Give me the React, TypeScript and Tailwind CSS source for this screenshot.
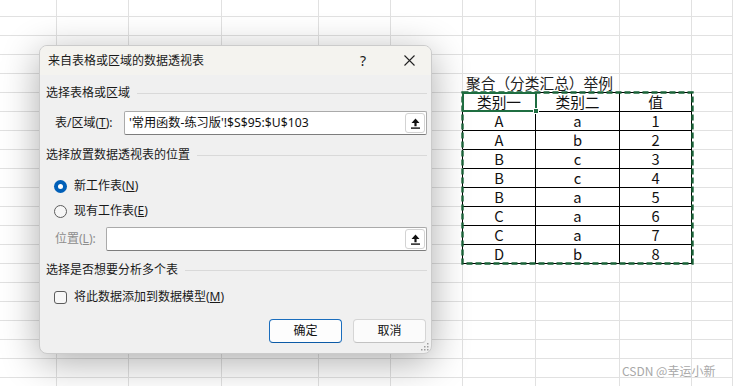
import clsx from "clsx";

const COLS = [57, 72, 93, 97, 72, 72, 73, 84, 72, 41];
const ROW_COUNT = 21;

const table = [
  ["类别一", "类别二", "值"],
  ["A", "a", "1"],
  ["A", "b", "2"],
  ["B", "c", "3"],
  ["B", "c", "4"],
  ["B", "a", "5"],
  ["C", "a", "6"],
  ["C", "a", "7"],
  ["D", "b", "8"],
];

// table sits at rows 5..13, cols 6..8
function Cell({ r, c }: { r: number; c: number }) {
  const inTable = r >= 5 && r <= 13 && c >= 6 && c <= 8;
  const leftEdge = r >= 5 && r <= 13 && c === 5;
  const topEdge = r === 4 && c >= 6 && c <= 8;
  const isTitle = r === 4 && c === 6;

  return (
    <div
      style={{ width: COLS[c] }}
      className={clsx(
        "relative shrink-0 h-full border-r border-b border-[#e1e1e1]",
        (inTable || leftEdge) && "border-r-black",
        (inTable || topEdge) && "border-b-black",
        isTitle && "border-r-transparent",
        inTable && "flex items-center justify-center"
      )}
    >
      {isTitle && (
        <span className="absolute left-[3px] bottom-0 whitespace-nowrap text-[14.7px] leading-[18px] text-[#222]">
          聚合（分类汇总）举例
        </span>
      )}
      {inTable && (
        <span className="text-[14.7px] leading-[18px] text-[#111]">{table[r - 5][c - 6]}</span>
      )}
    </div>
  );
}

function Sheet() {
  return (
    <div className="flex flex-col font-['Noto_Sans_CJK_SC',sans-serif]">
      {Array.from({ length: ROW_COUNT }).map((_, r) => (
        <div key={r} className={clsx("flex", r === 0 ? "h-[17px]" : "h-[19px]")}>
          {COLS.map((_, c) => (
            <Cell key={c} r={r} c={c} />
          ))}
        </div>
      ))}
    </div>
  );
}

function UploadIcon() {
  return (
    <svg width="9" height="11" viewBox="0 0 9 11">
      <path d="M4.5 0.5 L8.5 5 L5.6 5 L5.6 8.3 L3.4 8.3 L3.4 5 L0.5 5 Z" fill="#111" />
      <rect x="0" y="9.4" width="9" height="1.4" fill="#111" />
    </svg>
  );
}

function RefInput({ value }: { value?: string }) {
  return (
    <div className="flex-1 h-[24px] bg-white border border-[#aaaaaa] border-b-[#7d7d7d] rounded-[2px] flex items-center">
      <span className="pl-[4px] flex-1 text-[12.2px] leading-[16px] text-[#111] whitespace-nowrap">{value}</span>
      <div className="w-[20px] h-[20px] mr-[1px] rounded-[3px] border border-[#d3d3d3] bg-white flex items-center justify-center">
        <UploadIcon />
      </div>
    </div>
  );
}

function SectionHeader({ label }: { label: string }) {
  return (
    <div className="h-[18px] flex items-center">
      <span className="leading-[18px]">{label}</span>
      <div className="flex-1 h-px bg-[#d9d9d9] ml-[7px]" />
    </div>
  );
}

function Dialog() {
  return (
    <div className="absolute left-[39px] top-[45px] w-[393px] h-[309px] rounded-[8px] border border-[#cbcbcb] bg-[#f0f0f0] shadow-[0_8px_38px_rgba(0,0,0,0.33)] overflow-hidden flex flex-col text-[12px] text-[#1a1a1a] font-['Noto_Sans','Noto_Sans_CJK_SC',sans-serif]">
      <div className="h-[29px] shrink-0 bg-[#f4f3ef] flex items-center pl-[8px]">
        <span className="leading-[18px] mt-[1px]">来自表格或区域的数据透视表</span>
        <span className="ml-auto text-[14px] leading-[18px] mr-[38px]">?</span>
        <svg width="11" height="11" viewBox="0 0 11 11" className="mr-[16px]">
          <path d="M0.5 0.5 L10.5 10.5 M10.5 0.5 L0.5 10.5" stroke="#222" strokeWidth="1.1" />
        </svg>
      </div>

      <div className="flex flex-col pl-[6px] pr-[4px] pt-[9px]">
        <SectionHeader label="选择表格或区域" />

        <div className="mt-[9px] h-[24px] flex items-center">
          <span className="ml-[9px] w-[69px] leading-[16px]">
            表/区域(<span className="underline">T</span>):
          </span>
          <RefInput value="'常用函数-练习版'!$S$95:$U$103" />
        </div>

        <div className="mt-[11px]">
          <SectionHeader label="选择放置数据透视表的位置" />
        </div>

        <div className="mt-[13px] h-[18px] flex items-center ml-[8px]">
          <div className="w-[13px] h-[13px] rounded-full bg-[#005fb8] flex items-center justify-center">
            <div className="w-[5px] h-[5px] rounded-full bg-white" />
          </div>
          <span className="ml-[7px] leading-[18px]">
            新工作表(<span className="underline">N</span>)
          </span>
        </div>

        <div className="mt-[7px] h-[18px] flex items-center ml-[8px]">
          <div className="w-[13px] h-[13px] rounded-full border border-[#5c5c5c] bg-[#f6f6f6]" />
          <span className="ml-[7px] leading-[18px]">
            现有工作表(<span className="underline">E</span>)
          </span>
        </div>

        <div className="mt-[7px] h-[24px] flex items-center">
          <span className="ml-[9px] w-[51px] leading-[16px] text-[#8d8d8d]">
            位置(<span className="underline">L</span>):
          </span>
          <RefInput />
        </div>

        <div className="mt-[10px]">
          <SectionHeader label="选择是否想要分析多个表" />
        </div>

        <div className="mt-[9px] h-[18px] flex items-center ml-[8px]">
          <div className="w-[13px] h-[13px] rounded-[3px] border border-[#5c5c5c] bg-[#f7f7f7]" />
          <span className="ml-[7px] leading-[18px]">
            将此数据添加到数据模型(<span className="underline">M</span>)
          </span>
        </div>

        <div className="mt-[13px] flex justify-end gap-[11px] pr-[1px]">
          <button className="w-[73px] h-[24px] rounded-[4px] border border-[#1a6dbd] border-b-[#0b5aa6] bg-[#fdfdfd] text-[12px] leading-[16px] text-[#111]">
            确定
          </button>
          <button className="w-[73px] h-[24px] rounded-[4px] border border-[#d5d5d5] border-b-[#c2c2c2] bg-[#fbfbfb] text-[12px] leading-[16px] text-[#111]">
            取消
          </button>
        </div>
      </div>

      <svg width="8" height="8" viewBox="0 0 8 8" className="absolute right-[2px] bottom-[2px]">
        <rect x="6" y="0" width="1.5" height="1.5" fill="#9d9d9d" />
        <rect x="3" y="3" width="1.5" height="1.5" fill="#9d9d9d" />
        <rect x="6" y="3" width="1.5" height="1.5" fill="#9d9d9d" />
        <rect x="0" y="6" width="1.5" height="1.5" fill="#9d9d9d" />
        <rect x="3" y="6" width="1.5" height="1.5" fill="#9d9d9d" />
        <rect x="6" y="6" width="1.5" height="1.5" fill="#9d9d9d" />
      </svg>
    </div>
  );
}

export default function App() {
  return (
    <div className="relative w-[733px] h-[386px] overflow-hidden bg-white">
      <Sheet />

      {/* copy marquee around the table */}
      <svg width="234" height="175" viewBox="0 0 234 175" className="absolute left-[461px] top-[91px]">
        <rect x="1.5" y="1.5" width="230" height="171" fill="none" stroke="#1a6338" strokeWidth="2.4" strokeDasharray="6 3" />
      </svg>

      {/* active cell */}
      <div className="absolute left-[462px] top-[92px] w-[75px] h-[20px] border-2 border-[#1f6e41]" />
      <div className="absolute left-[533px] top-[108px] w-[6px] h-[6px] bg-[#1f6e41] border border-white" />

      <Dialog />

      <span className="absolute left-[622px] top-[363px] text-[12px] leading-[16px] text-[#a8a8a8] font-['Noto_Sans_CJK_SC',sans-serif] [text-shadow:0_0_1px_#fff]">
        CSDN @幸运小新
      </span>
    </div>
  );
}
